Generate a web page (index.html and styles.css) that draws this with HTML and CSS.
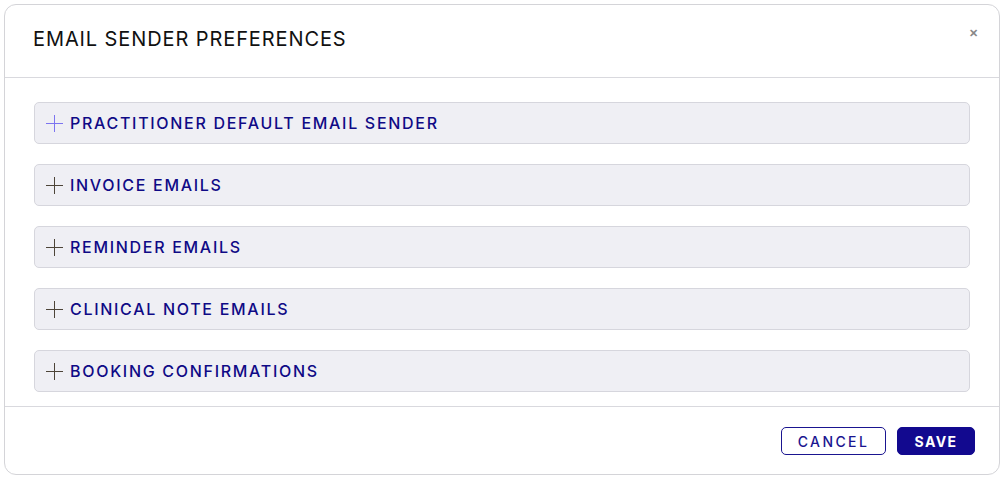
FILE: index.html
```html
<!DOCTYPE html>
<html>
<head>
<meta charset="utf-8">
<link rel="stylesheet" href="styles.css">
</head>
<body>
<div class="modal">
  <div class="modal-header">
    <h2 class="modal-title">EMAIL SENDER PREFERENCES</h2>
    <button class="close">&#x2715;</button>
  </div>
  <div class="modal-body">
    <div class="acc-row"><span class="plus plus-active"></span><span class="acc-label">PRACTITIONER DEFAULT EMAIL SENDER</span></div>
    <div class="acc-row"><span class="plus"></span><span class="acc-label">INVOICE EMAILS</span></div>
    <div class="acc-row"><span class="plus"></span><span class="acc-label">REMINDER EMAILS</span></div>
    <div class="acc-row"><span class="plus"></span><span class="acc-label">CLINICAL NOTE EMAILS</span></div>
    <div class="acc-row"><span class="plus"></span><span class="acc-label">BOOKING CONFIRMATIONS</span></div>
  </div>
  <div class="modal-footer">
    <button class="btn btn-outline">CANCEL</button>
    <button class="btn btn-primary">SAVE</button>
  </div>
</div>
</body>
</html>
```

FILE: styles.css
```css
* { box-sizing: border-box; }
html, body { margin: 0; padding: 0; background: #fff; }
body { padding: 4px; font-family: Inter, "Noto Sans", sans-serif; }

.modal {
  width: 996px;
  height: 471px;
  border: 1px solid #d4d4d8;
  border-radius: 12px;
  background: #fff;
  display: flex;
  flex-direction: column;
}

.modal-header {
  height: 73px;
  padding: 0 24px 0 28px;
  display: flex;
  align-items: center;
  justify-content: space-between;
  border-bottom: 1px solid #d9d9de;
  flex: none;
}
.modal-title {
  margin: 0;
  font-size: 20px;
  font-weight: 400;
  color: #111;
  letter-spacing: 0.9px;
  margin-top: -4px;
}
.close {
  border: 0;
  background: none;
  color: #888;
  font-size: 11px;
  padding: 0;
  margin-top: -16px;
  margin-right: -3px;
  font-weight: 700;
  cursor: pointer;
}

.modal-body {
  padding: 24px 29px 14px;
  display: flex;
  flex-direction: column;
  gap: 20px;
  border-bottom: 1px solid #d9d9de;
  flex: none;
}
.acc-row {
  height: 42px;
  background: #efeff4;
  border: 1px solid #d6d6dd;
  border-radius: 5px;
  display: flex;
  align-items: center;
  padding-left: 11px;
  gap: 7px;
}
.plus {
  width: 17px;
  height: 17px;
  position: relative;
  flex: none;
}
.plus::before, .plus::after {
  content: "";
  position: absolute;
  background: #4d4438;
}
.plus::before { left: 0; right: 0; top: 8px; height: 1px; }
.plus::after { top: 0; bottom: 0; left: 8px; width: 1px; }
.plus-active::before, .plus-active::after { background: #7c74f0; }

.acc-label {
  font-size: 16px;
  font-weight: 500;
  color: #0f0a86;
  letter-spacing: 1.7px;
  margin-top: -1px;
}

.modal-footer {
  flex: 1;
  display: flex;
  justify-content: flex-end;
  align-items: flex-start;
  gap: 11px;
  padding: 20px 24px 0 0;
}
.btn {
  height: 28px;
  border-radius: 5px;
  font-family: Inter, sans-serif;
  font-size: 14px;
  font-weight: 600;
  letter-spacing: 2px;
  cursor: pointer;
}
.btn-outline {
  width: 105px;
  background: #fff;
  color: #1a1590;
  border: 1px solid #1a1590;
  font-weight: 500;
  letter-spacing: 2.4px;
}
.btn-primary {
  width: 78px;
  background: #12098f;
  color: #fff;
  border: 1px solid #12098f;
  font-weight: 700;
  letter-spacing: 1.4px;
}
```
